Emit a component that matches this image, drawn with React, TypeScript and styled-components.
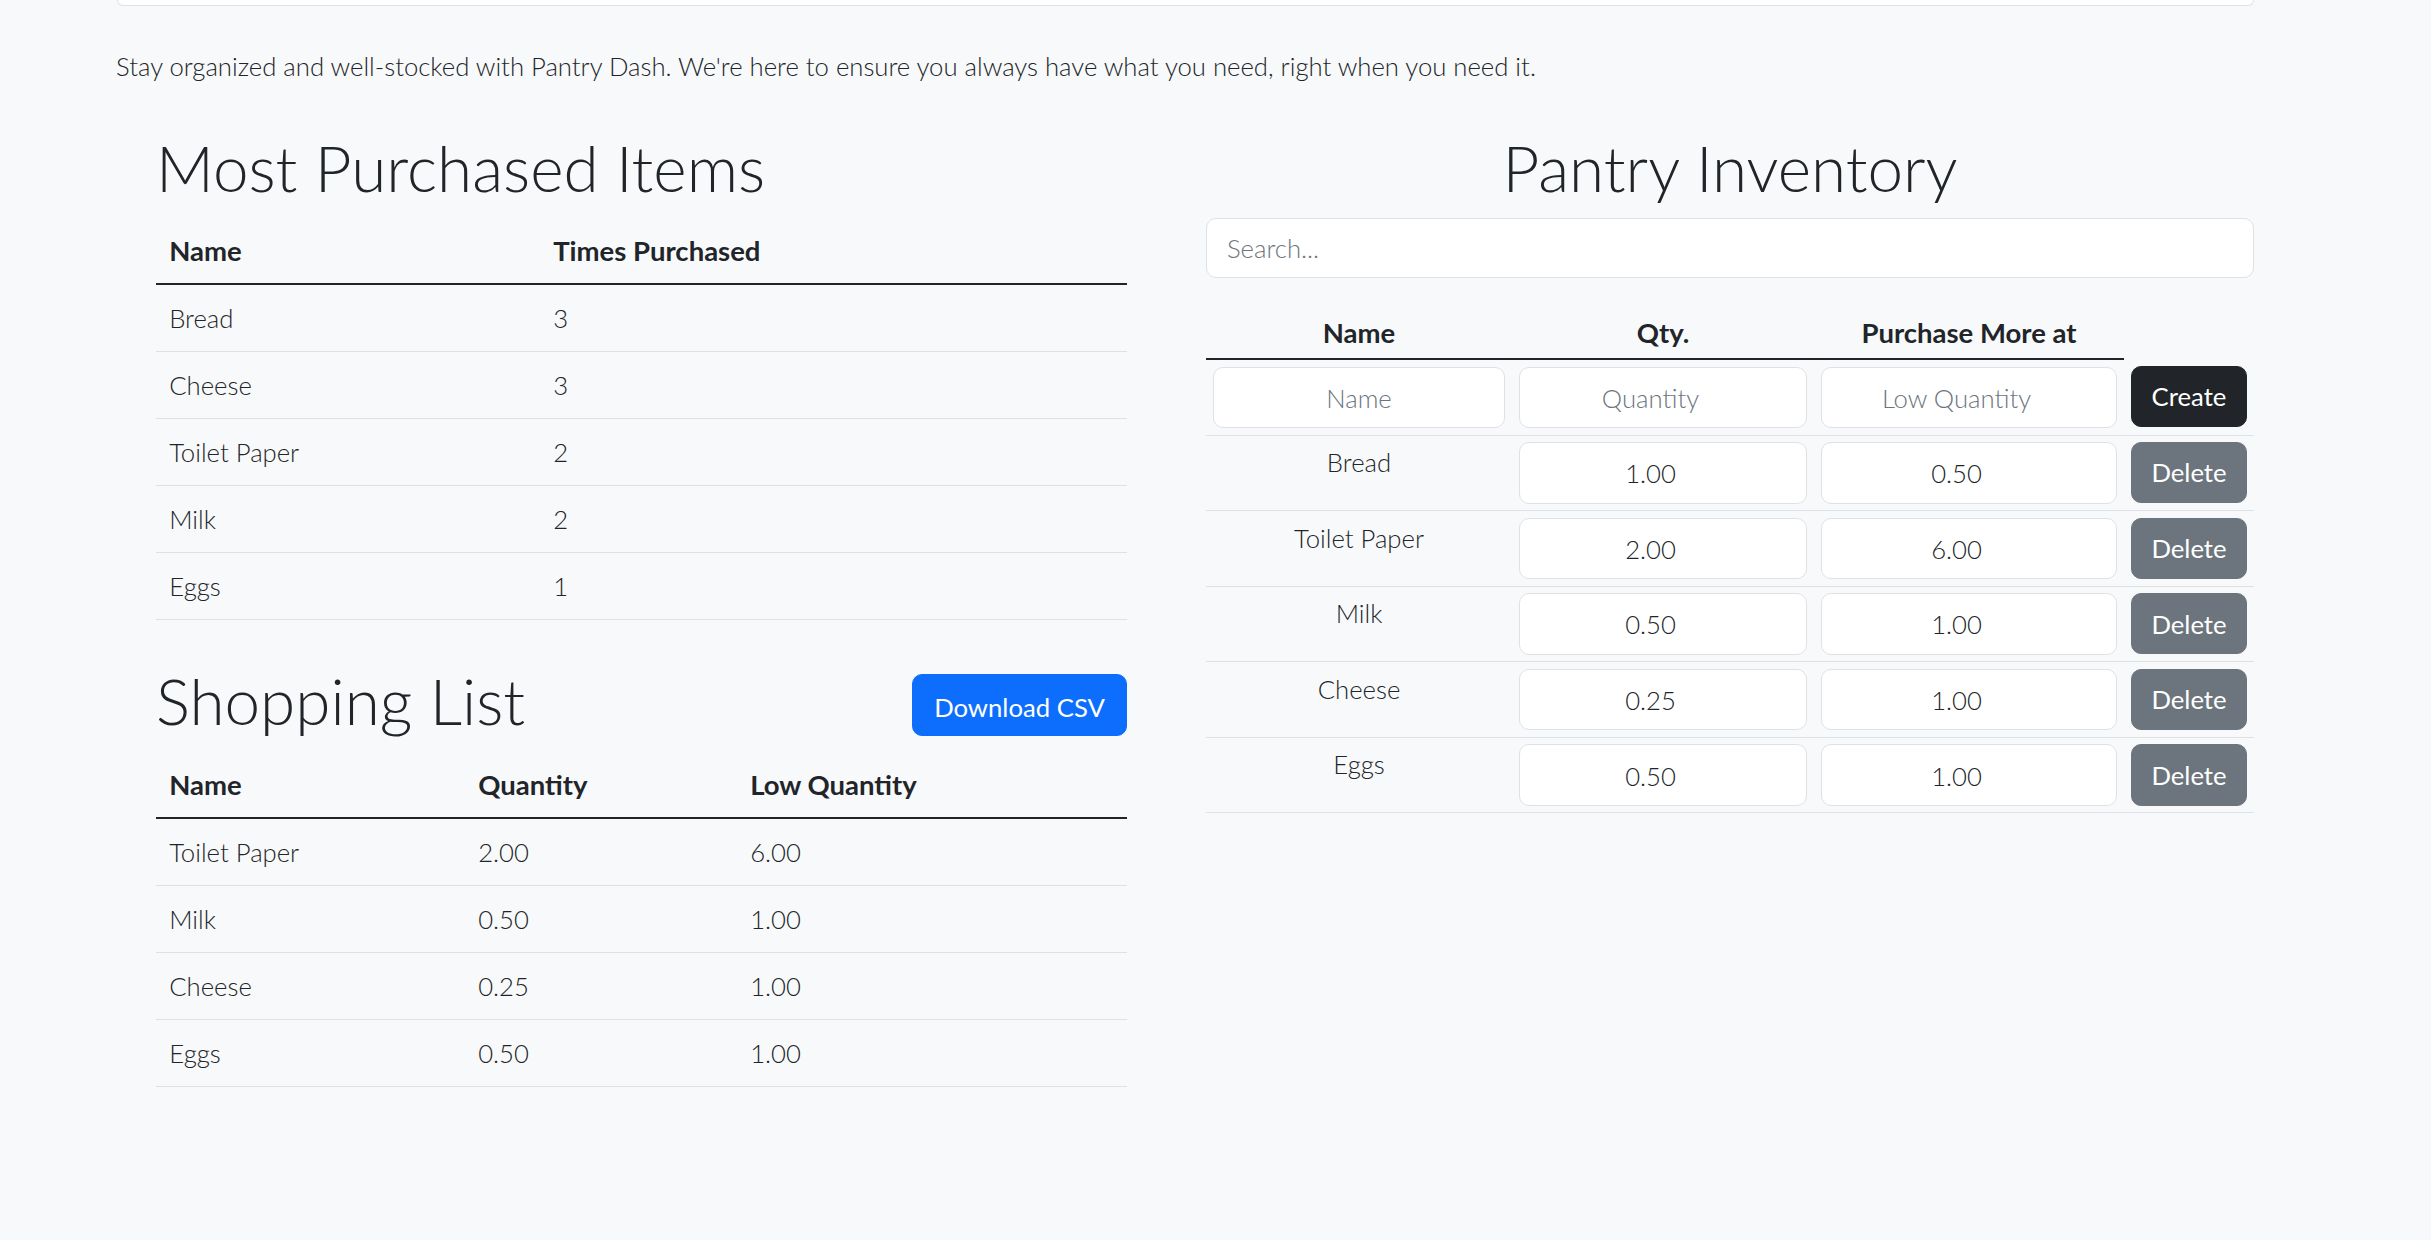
import React from "react";
import styled, { createGlobalStyle, css } from "styled-components";

const GlobalStyle = createGlobalStyle`
  *, *::before, *::after { box-sizing: border-box; }
  body {
    margin: 0;
    background: #f8f9fa;
    color: #212529;
    font-family: "Lato", "Open Sans", sans-serif;
    font-weight: 300;
    font-size: 25.7px;
    line-height: 39.6px;
  }
`;

const Container = styled.div`
  margin-left: 116px;
  width: 2138px;
`;

const TopCard = styled.div`
  height: 6px;
  margin-left: 1px;
  background: #ffffff;
  border: 1px solid #dee2e6;
  border-top: none;
  border-radius: 0 0 10px 10px;
`;

const Intro = styled.p`
  margin: 41px 0 0;
  font-weight: 300;
`;

const Columns = styled.div`
  display: grid;
  grid-template-columns: 971px 1048px;
  column-gap: 79px;
  margin-top: 43.6px;
  padding-left: 40px;
`;

const Section = styled.section`
  display: flex;
  flex-direction: column;
`;

const Title = styled.h2<{ $center?: boolean }>`
  flex: 1;
  margin: 0;
  font-size: 63.8px;
  font-weight: 300;
  line-height: 75.6px;
  text-align: ${(p) => (p.$center ? "center" : "left")};
`;

const TitleBar = styled.div<{ $gapTop?: number; $mb: number }>`
  display: flex;
  justify-content: space-between;
  align-items: center;
  margin-top: ${(p) => p.$gapTop ?? 0}px;
  margin-bottom: ${(p) => p.$mb}px;
`;

const Button = styled.button<{ $variant: "primary" | "dark" | "secondary"; $block?: boolean }>`
  font-family: "Lato", "Open Sans", sans-serif;
  font-weight: 400;
  font-size: 25.7px;
  line-height: 39.6px;
  padding: 10.3px 19.8px 9.3px;
  border-radius: 10px;
  color: #ffffff;
  cursor: pointer;
  white-space: nowrap;
  ${(p) =>
    p.$variant === "primary"
      ? css`background: #0d6efd; border: 1px solid #0d6efd;`
      : p.$variant === "dark"
      ? css`background: #212529; border: 1px solid #212529;`
      : css`background: #6c757d; border: 1px solid #6c757d;`}
  ${(p) => p.$block && css`display: block; width: 100%; padding-left: 0; padding-right: 0;`}
`;

const DownloadButton = styled(Button)`
  flex: none;
  margin-top: 8px;
  width: 215px;
  padding: 12.2px 0 7.6px;
`;

const Table = styled.table`
  width: 100%;
  border-collapse: collapse;
  table-layout: fixed;
`;

const Th = styled.th<{ $sm?: boolean }>`
  padding: ${(p) => (p.$sm ? "7.6px 6.6px 5.6px" : "14.2px 13.2px 12.2px")};
  font-size: 27.5px;
  font-weight: 700;
  text-align: ${(p) => (p.$sm ? "center" : "left")};
  vertical-align: top;
  border-bottom: 2px solid #212529;
`;

const Td = styled.td<{ $sm?: boolean }>`
  padding: ${(p) => (p.$sm ? "6.6px" : "14.2px 13.2px 12.2px")};
  font-weight: 300;
  text-align: ${(p) => (p.$sm ? "center" : "left")};
  vertical-align: top;
  border-bottom: 1px solid #dee2e6;
`;

const NameText = styled.div`
  padding-top: 1px;
`;

const Field = styled.input<{ $kind?: "search" | "text" | "number" }>`
  display: block;
  width: 100%;
  height: ${(p) => (p.$kind === "search" ? 60 : 61.4)}px;
  padding: 10.3px 19.8px 9.3px;
  ${(p) => p.$kind === "search" && css`padding-left: 20px;`}
  ${(p) => p.$kind === "number" && css`padding-right: 44.8px;`}
  font-family: "Lato", "Open Sans", sans-serif;
  font-weight: 300;
  font-size: 25.7px;
  line-height: 39.6px;
  color: #212529;
  background: #ffffff;
  border: 1px solid #dee2e6;
  border-radius: 10px;
  text-align: ${(p) => (p.$kind === "search" ? "left" : "center")};
  outline: none;
  -moz-appearance: textfield;
  &::placeholder {
    color: #6c757d;
    opacity: 1;
  }
  &::-webkit-inner-spin-button,
  &::-webkit-outer-spin-button {
    -webkit-appearance: none;
    margin: 0;
  }
`;

const InventoryTable = styled(Table)`
  margin-top: 27.2px;
`;

const mostPurchased = [
  { name: "Bread", times: 3 },
  { name: "Cheese", times: 3 },
  { name: "Toilet Paper", times: 2 },
  { name: "Milk", times: 2 },
  { name: "Eggs", times: 1 },
];

const shopping = [
  { name: "Toilet Paper", qty: "2.00", low: "6.00" },
  { name: "Milk", qty: "0.50", low: "1.00" },
  { name: "Cheese", qty: "0.25", low: "1.00" },
  { name: "Eggs", qty: "0.50", low: "1.00" },
];

const inventory = [
  { name: "Bread", qty: "1.00", low: "0.50" },
  { name: "Toilet Paper", qty: "2.00", low: "6.00" },
  { name: "Milk", qty: "0.50", low: "1.00" },
  { name: "Cheese", qty: "0.25", low: "1.00" },
  { name: "Eggs", qty: "0.50", low: "1.00" },
];

export default function App() {
  return (
    <>
      <GlobalStyle />
      <Container>
        <TopCard />
        <Intro>
          Stay organized and well-stocked with Pantry Dash. We're here to ensure you always have what you need, right
          when you need it.
        </Intro>
        <Columns>
          <Section>
            <TitleBar $mb={11.2}>
              <Title>Most Purchased Items</Title>
            </TitleBar>
            <Table>
              <colgroup>
                <col style={{ width: 384 }} />
                <col />
              </colgroup>
              <thead>
                <tr>
                  <Th>Name</Th>
                  <Th>Times Purchased</Th>
                </tr>
              </thead>
              <tbody>
                {mostPurchased.map((r) => (
                  <tr key={r.name}>
                    <Td>{r.name}</Td>
                    <Td>{r.times}</Td>
                  </tr>
                ))}
              </tbody>
            </Table>

            <TitleBar $gapTop={43.5} $mb={11.9}>
              <Title>Shopping List</Title>
              <DownloadButton $variant="primary">Download CSV</DownloadButton>
            </TitleBar>
            <Table>
              <colgroup>
                <col style={{ width: 309 }} />
                <col style={{ width: 272 }} />
                <col />
              </colgroup>
              <thead>
                <tr>
                  <Th>Name</Th>
                  <Th>Quantity</Th>
                  <Th>Low Quantity</Th>
                </tr>
              </thead>
              <tbody>
                {shopping.map((r) => (
                  <tr key={r.name}>
                    <Td>{r.name}</Td>
                    <Td>{r.qty}</Td>
                    <Td>{r.low}</Td>
                  </tr>
                ))}
              </tbody>
            </Table>
          </Section>

          <Section>
            <TitleBar $mb={12.2}>
              <Title $center>Pantry Inventory</Title>
            </TitleBar>
            <Field $kind="search" placeholder="Search..." />
            <InventoryTable>
              <colgroup>
                <col style={{ width: 306 }} />
                <col style={{ width: 302 }} />
                <col style={{ width: 310 }} />
                <col />
              </colgroup>
              <thead>
                <tr>
                  <Th $sm>Name</Th>
                  <Th $sm>Qty.</Th>
                  <Th $sm>Purchase More at</Th>
                </tr>
              </thead>
              <tbody>
                <tr>
                  <Td $sm>
                    <Field $kind="text" placeholder="Name" />
                  </Td>
                  <Td $sm>
                    <Field $kind="number" type="number" placeholder="Quantity" />
                  </Td>
                  <Td $sm>
                    <Field $kind="number" type="number" placeholder="Low Quantity" />
                  </Td>
                  <Td $sm>
                    <Button $variant="dark" $block>
                      Create
                    </Button>
                  </Td>
                </tr>
                {inventory.map((r) => (
                  <tr key={r.name}>
                    <Td $sm>
                      <NameText>{r.name}</NameText>
                    </Td>
                    <Td $sm>
                      <Field $kind="number" type="number" step="0.01" defaultValue={r.qty} />
                    </Td>
                    <Td $sm>
                      <Field $kind="number" type="number" step="0.01" defaultValue={r.low} />
                    </Td>
                    <Td $sm>
                      <Button $variant="secondary" $block>
                        Delete
                      </Button>
                    </Td>
                  </tr>
                ))}
              </tbody>
            </InventoryTable>
          </Section>
        </Columns>
      </Container>
    </>
  );
}
